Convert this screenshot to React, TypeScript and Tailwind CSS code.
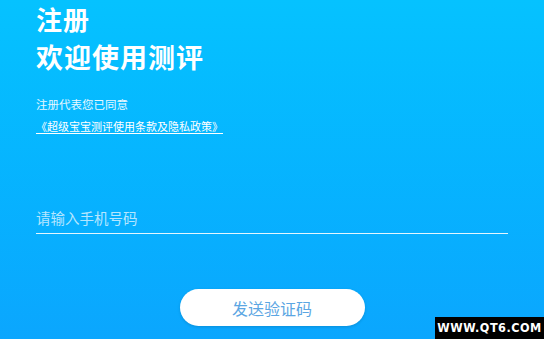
import React from 'react';

const cjk = { fontFamily: '"Noto Sans CJK SC", "Noto Sans", sans-serif' };

const App: React.FC = () => {
  return (
    <div
      className="relative w-[544px] h-[339px] overflow-hidden bg-gradient-to-b from-[#05c2ff] to-[#0ba6fe] text-white"
      style={cjk}
    >
      <div className="px-[36px] pt-[3px]">
        {/* Header */}
        <h1 className="text-[26px] font-bold leading-[32px] tracking-[1px]">注册</h1>
        <h2 className="mt-[6px] text-[27px] font-bold leading-[32px] tracking-[1px]">欢迎使用测评</h2>

        {/* Agreement */}
        <p className="mt-[23px] text-[11.5px] leading-[16px] text-white/90">注册代表您已同意</p>
        <a href="#" className="-mt-[1px] inline-block text-[11px] leading-[16px] underline underline-offset-[2px]">
          《超级宝宝测评使用条款及隐私政策》
        </a>

        {/* Phone input */}
        <div className="mt-[69px] w-[472px] border-b border-[#e4f6ff] pb-[4px]">
          <input
            className="w-full bg-transparent text-[14.5px] leading-[22px] outline-none placeholder:text-[#b5e6ff]"
            placeholder="请输入手机号码"
          />
        </div>
      </div>

      {/* Send code button */}
      <div className="mt-[55px] flex justify-center">
        <button className="w-[185px] h-[37px] rounded-full bg-white text-[16px] text-[#5ba6e3] shadow-[0_1px_3px_rgba(0,0,0,0.15)]">
          发送验证码
        </button>
      </div>

      {/* Watermark */}
      <div
        className="absolute right-0 bottom-0 w-[109px] h-[22px] bg-black flex items-center justify-center text-[12.5px] font-bold tracking-[0.5px]"
        style={{ fontFamily: '"DejaVu Sans Condensed", "DejaVu Sans", sans-serif' }}
      >
        WWW.QT6.COM
      </div>
    </div>
  );
};

export default App;
